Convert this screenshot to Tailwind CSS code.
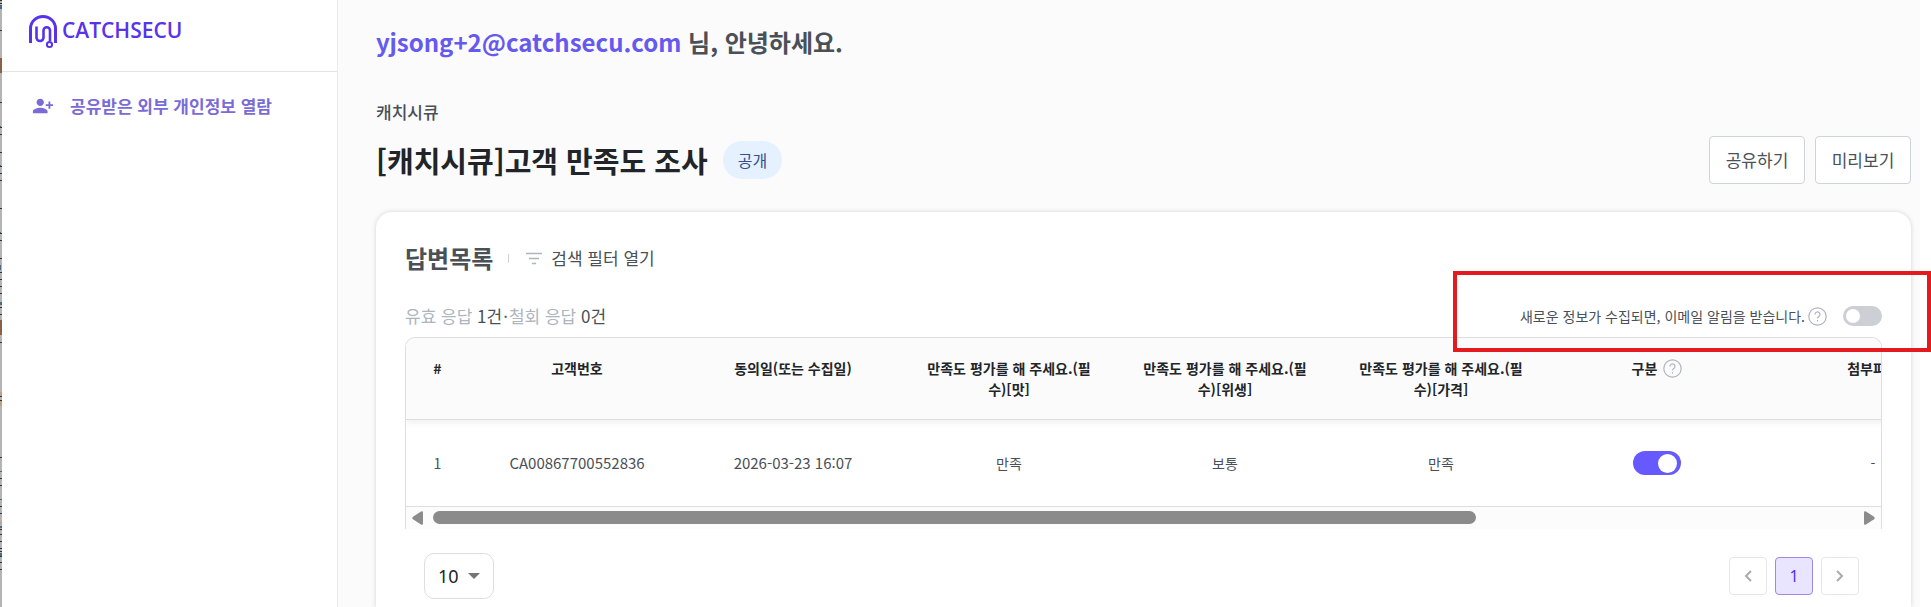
<!DOCTYPE html>
<html lang="ko">
<head>
  <meta charset="UTF-8">
  <meta name="viewport" content="width=device-width, initial-scale=1.0">
  <title>CATCHSECU</title>
  <script src="https://cdn.jsdelivr.net/npm/@tailwindcss/browser@4"></script>
</head>
<body class="relative flex h-screen overflow-hidden bg-white font-['Noto_Sans_CJK_KR',sans-serif] text-[17px] text-[#495057]">

  <!-- window edge -->
  <div class="w-[2px] shrink-0 bg-[#b4b4b4]">
    <svg class="block h-[607px] w-[2px]" viewBox="0 0 2 607" shape-rendering="crispEdges">
      <path fill="#333" d="M0 0h2v1H0zM0 3h2v1H0zM0 30h2v1H0zM0 102h2v1H0zM0 127h2v1H0zM0 134h2v1H0zM0 152h2v1H0zM0 166h2v1H0zM0 173h2v1H0zM0 180h2v1H0zM0 208h2v1H0zM0 233h2v1H0zM0 240h2v1H0zM0 258h2v1H0zM0 272h2v1H0zM0 279h2v1H0zM0 286h2v1H0zM0 293h2v1H0zM0 307h2v1H0zM0 314h2v1H0zM0 342h2v1H0zM0 396h2v1H0zM0 400h2v1H0zM0 457h2v1H0zM0 478h2v1H0zM0 485h2v1H0zM0 506h2v1H0zM0 513h2v1H0zM0 529h2v1H0zM0 534h2v1H0zM0 541h2v1H0zM0 548h2v1H0zM0 551h2v1H0zM0 556h2v1H0zM0 562h2v1H0zM0 569h2v1H0z"/>
      <path fill="#4a6a8a" d="M0 5h2v4H0zM0 126h1v1H0zM0 165h1v1H0zM0 232h1v1H0zM0 265h1v5H0zM0 302h2v3H0zM0 471h2v1H0zM0 499h2v1H0zM0 526h2v2H0zM0 553h2v3H0z"/>
      <path fill="#8a6048" d="M0 58h2v15H0zM0 320h2v15H0z"/>
      <path fill="#c0a080" d="M0 392h2v4H0zM0 401h2v5H0zM0 522h2v2H0z"/>
    </svg>
  </div>

  <aside class="flex w-[336px] shrink-0 flex-col border-r border-[#e9eaec]">
    <div class="h-[72px] border-b border-[#e4e4e4] pt-[14px] pl-[26px]">
      <a href="#" class="flex items-center gap-1">
        <svg class="h-[36px] w-[30px]" viewBox="0 0 30 36" fill="none" stroke="#5733eb" stroke-width="3">
          <path d="M2.500 29V14.500a12.500 12 0 0 1 25 0V29"/>
          <path stroke-width="2.600" d="M8.500 12.500v11a3.500 3.500 0 0 0 7 0v-7a3 3 0 0 1 6.500 0V27"/>
          <circle cx="21.500" cy="30.500" r="2.600" stroke-width="2"/>
        </svg>
        <span class="-mt-1 font-['Open_Sans',sans-serif] text-[21px] leading-8 font-semibold text-[#5733eb]">CATCHSECU</span>
      </a>
    </div>
    <nav class="pt-[18px] pl-[30px]">
      <a href="#" class="flex items-center gap-4 leading-8 font-bold text-[#7a6bd6]">
        <svg class="size-[22px]" viewBox="0 0 24 24" fill="currentColor">
          <path d="M13 8c0-2.210-1.790-4-4-4S5 5.790 5 8s1.790 4 4 4 4-1.790 4-4zm2 2v2h3v3h2v-3h3v-2h-3V7h-2v3h-3zM1 18v2h16v-2c0-2.660-5.330-4-8-4s-8 1.340-8 4z"/>
        </svg>
        공유받은 외부 개인정보 열람
      </a>
    </nav>
  </aside>

  <main class="mr-[11px] flex min-w-0 flex-1 flex-col bg-[#fbfbfb] pt-6 pr-[9px] pl-[38px]">
    <p class="text-2xl leading-9 font-bold"><span class="text-[#6559ee]">yjsong+2@catchsecu.com</span> 님, 안녕하세요.</p>

    <div class="mt-10 flex items-end justify-between">
      <div class="pb-1">
        <p class="leading-6 font-medium">캐치시큐</p>
        <div class="mt-4 flex items-center gap-[15px]">
          <h1 class="text-[29px] leading-10 font-bold text-[#212529]">[캐치시큐]고객 만족도 조사</h1>
          <span class="rounded-full bg-[#e5f1ff] px-[15px] py-[7px] text-base leading-6 text-[#364f8f]">공개</span>
        </div>
      </div>
      <div class="flex gap-[10px]">
        <button class="h-12 w-24 rounded-[4px] border border-[#ced4da] bg-white">공유하기</button>
        <button class="h-12 w-24 rounded-[4px] border border-[#ced4da] bg-white">미리보기</button>
      </div>
    </div>

    <section class="mt-7 flex-1 shrink-0 rounded-t-2xl bg-white px-[29px] pt-7 shadow-[0_0_5px_rgba(0,0,0,0.16)]">
      <div class="flex items-center">
        <h2 class="text-2xl leading-9 font-bold">답변목록</h2>
        <span class="mx-[15px] h-[9px] w-px bg-[#ced4da]"></span>
        <button class="flex items-center gap-[7px]">
          <svg class="size-[20px]" viewBox="0 0 20 20" fill="none" stroke="#adb5bd" stroke-width="1.500">
            <path d="M2 5.500h16M5 10.500h10M8 15.500h4"/>
          </svg>
          검색 필터 열기
        </button>
      </div>

      <div class="mt-7 flex h-6 items-center justify-between">
        <p><span class="text-[#adb5bd]">유효 응답</span> 1건<span class="mx-px">·</span><span class="text-[#adb5bd]">철회 응답</span> 0건</p>
        <div class="flex items-center text-sm">
          <label for="mail-alert">새로운 정보가 수집되면, 이메일 알림을 받습니다.</label>
          <svg class="ml-[3px] size-[19px]" viewBox="0 0 19 19" fill="none" stroke="#adb5bd" stroke-width="1.200">
            <circle cx="9.500" cy="9.500" r="8.700"/>
            <path d="M7 7.500a2.500 2.500 0 1 1 3.800 2.100c-.9.600-1.300 1-1.300 2M9.500 13v1.500"/>
          </svg>
          <input id="mail-alert" type="checkbox" class="ml-4 h-5 w-[39px] appearance-none rounded-full bg-[#cccfd4] p-[3px] before:block before:size-[14px] before:rounded-full before:bg-white">
        </div>
      </div>

      <div class="mt-[9px] overflow-hidden rounded-t-[10px] border border-b-0 border-[#dedede]">
        <table class="w-[1575px] table-fixed border-collapse text-center text-sm">
          <colgroup>
            <col class="w-[63px]"><col><col><col><col><col><col><col>
          </colgroup>
          <thead class="bg-[#fbfbfb] leading-[21px] text-[#212529] shadow-[0_4px_6px_rgba(0,0,0,0.06)]">
            <tr class="h-[81px] border-b border-[#dedede] align-top">
              <th class="pt-5">#</th>
              <th class="pt-5">고객번호</th>
              <th class="pt-5">동의일(또는 수집일)</th>
              <th class="px-5 pt-5 break-all">만족도 평가를 해 주세요.(필수)[맛]</th>
              <th class="px-5 pt-5 break-all">만족도 평가를 해 주세요.(필수)[위생]</th>
              <th class="px-5 pt-5 break-all">만족도 평가를 해 주세요.(필수)[가격]</th>
              <th class="pt-5">
                <div class="flex items-center justify-center gap-[6px]">
                  구분
                  <svg class="size-[19px]" viewBox="0 0 19 19" fill="none" stroke="#adb5bd" stroke-width="1.200">
                    <circle cx="9.500" cy="9.500" r="8.700"/>
                    <path d="M7 7.500a2.500 2.500 0 1 1 3.800 2.100c-.9.600-1.300 1-1.300 2M9.500 13v1.500"/>
                  </svg>
                </div>
              </th>
              <th class="pt-5">첨부파일</th>
            </tr>
          </thead>
          <tbody>
            <tr class="h-[87px] border-b border-[#dedede]">
              <td>1</td>
              <td class="text-[15px]">CA00867700552836</td>
              <td class="text-[15px]">2026-03-23 16:07</td>
              <td>만족</td>
              <td>보통</td>
              <td>만족</td>
              <td><input type="checkbox" checked aria-label="구분" class="h-6 w-12 appearance-none rounded-full bg-[#6559ff] py-[3px] pl-[25px] align-middle before:block before:size-[19px] before:rounded-full before:bg-white"></td>
              <td>-</td>
            </tr>
          </tbody>
        </table>
        <div class="flex h-[22px] items-center bg-[#fcfcfc] px-[6px]">
          <svg class="h-[14px] w-[11px]" viewBox="0 0 11 14" fill="#8b8b8b"><path d="M11 1.500v11q0 2-2 1L1 8.300q-1.500-1.300 0-2.600L9 .5q2-1 2 1z"/></svg>
          <div class="mx-[10px] flex-1">
            <div class="h-[13px] rounded-full bg-[#8b8b8b]" style="width: 73.400%"></div>
          </div>
          <svg class="h-[14px] w-[11px]" viewBox="0 0 11 14" fill="#8b8b8b"><path d="M0 1.500v11q0 2 2 1l8-5.200q1.500-1.300 0-2.600L2 .5q-2-1-2 1z"/></svg>
        </div>
      </div>

      <div class="mt-6 flex items-center justify-between pr-[23px] pl-[19px]">
        <div class="relative">
          <select aria-label="페이지당 개수" class="h-[46px] w-[70px] appearance-none rounded-[10px] border border-[#dedede] bg-white pl-[13px] font-['Noto_Sans',sans-serif] text-lg text-[#212529]">
            <option>10</option>
          </select>
          <svg class="pointer-events-none absolute top-5 right-[14px] h-[6px] w-[12px]" viewBox="0 0 12 6" fill="#757575"><path d="M0 0h12L6 6z"/></svg>
        </div>
        <div class="flex gap-2">
          <button aria-label="이전" class="flex size-[38px] items-center justify-center rounded-[4px] border border-[#e6e6e6]">
            <svg class="h-3 w-2" viewBox="0 0 8 12" fill="none" stroke="#ababab" stroke-width="2"><path d="M7 1L2 6l5 5"/></svg>
          </button>
          <button class="size-[38px] rounded-[4px] border border-[#9c8ae0] bg-[#e9e4ff] font-['Noto_Sans',sans-serif] text-base text-[#5733eb]">1</button>
          <button aria-label="다음" class="flex size-[38px] items-center justify-center rounded-[4px] border border-[#e6e6e6]">
            <svg class="h-3 w-2" viewBox="0 0 8 12" fill="none" stroke="#ababab" stroke-width="2"><path d="M1 1l5 5-5 5"/></svg>
          </button>
        </div>
      </div>
    </section>
  </main>

  <!-- highlight over the e-mail alert setting -->
  <div class="pointer-events-none absolute top-[271px] right-0 h-[81px] w-[478px] border-4 border-[#e31b1f]"></div>
</body>
</html>
